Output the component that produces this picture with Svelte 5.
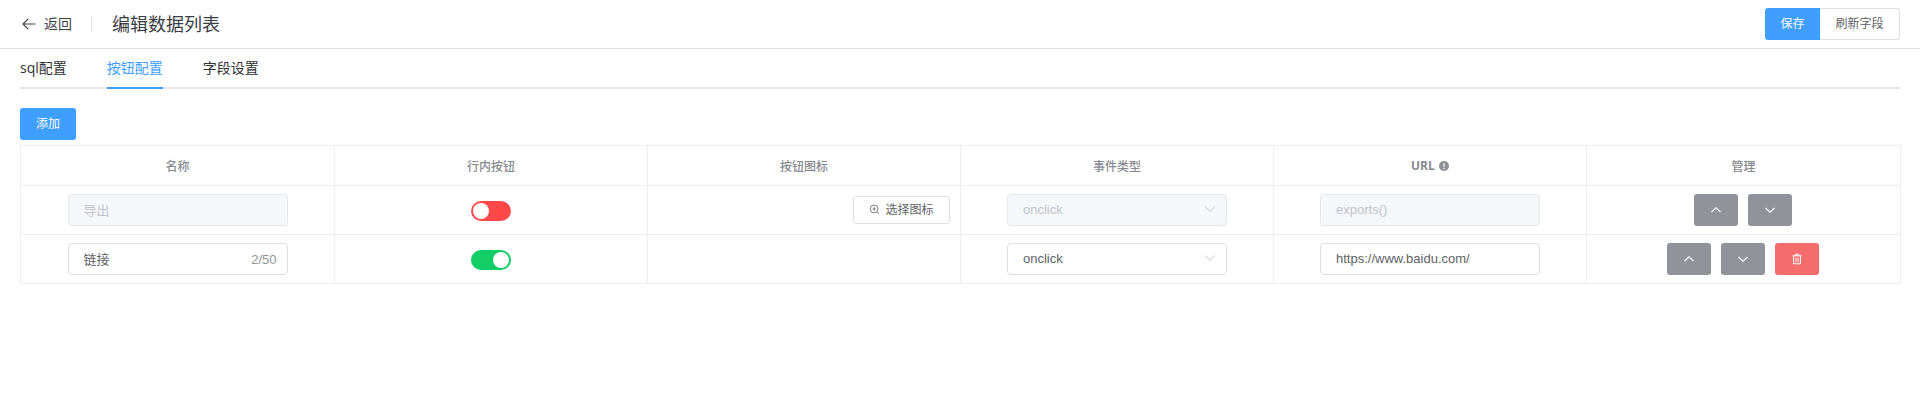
<script>
  const columns = ['名称', '行内按钮', '按钮图标', '事件类型', 'URL', '管理'];
</script>

{#snippet chevron(up)}
  <svg class="glyph" viewBox="0 0 12 12" aria-hidden="true">
    <path d={up ? 'M1.5 8 6 3.8 10.5 8' : 'M1.5 4 6 8.2 10.5 4'} fill="none" stroke="currentColor" stroke-width="1.1" />
  </svg>
{/snippet}

{#snippet opButton(up)}
  <button class="op">{@render chevron(up)}</button>
{/snippet}

{#snippet selectBox(disabled)}
  <div class="field select" class:disabled>
    <span>onclick</span>
    <svg class="arrow" viewBox="0 0 12 12" aria-hidden="true">
      <path d="M1 3.5 6 8.5 11 3.5" fill="none" stroke="currentColor" stroke-width="1" />
    </svg>
  </div>
{/snippet}

<div class="page">
  <header class="top">
    <div class="back">
      <svg class="back-icon" viewBox="0 0 14 14" aria-hidden="true">
        <path d="M13.5 7H1M6.2 1.8 1 7l5.2 5.2" fill="none" stroke="currentColor" stroke-width="1.2" />
      </svg>
      <span class="back-label">返回</span>
    </div>
    <i class="divider"></i>
    <h1>编辑数据列表</h1>
    <div class="group">
      <button class="save">保存</button>
      <button class="refresh">刷新字段</button>
    </div>
  </header>

  <nav class="tabs">
    <span class="tab">sql配置</span>
    <span class="tab active">按钮配置</span>
    <span class="tab">字段设置</span>
  </nav>

  <div class="toolbar"><button class="add">添加</button></div>

  <table>
    <colgroup>
      <col class="edge" /><col class="mid" /><col class="mid" /><col class="mid" /><col class="mid" /><col class="edge" />
    </colgroup>
    <thead>
      <tr>
        {#each columns as col}
          <th class:latin={col === 'URL'}>
            {col}
            {#if col === 'URL'}
              <svg class="info" viewBox="0 0 12 12" aria-hidden="true">
                <circle cx="6" cy="6" r="6" fill="#8c8f96" />
                <path d="M6 2.6v4.2M6 8v1.6" stroke="#fff" stroke-width="1.5" />
              </svg>
            {/if}
          </th>
        {/each}
      </tr>
    </thead>
    <tbody>
      <tr>
        <td><div class="field disabled"><span>导出</span></div></td>
        <td><span class="switch off"><b></b></span></td>
        <td class="right">
          <button class="choose">
            <svg class="zoom-icon" viewBox="0 0 12 12" aria-hidden="true">
              <circle cx="5.6" cy="5.4" r="4.3" fill="none" stroke="currentColor" stroke-width="0.9" />
              <path d="M8.8 8.6 11 10.8M5.6 3.4v3.8M3.9 5.5h3.4" fill="none" stroke="currentColor" stroke-width="0.9" />
            </svg>
            <span>选择图标</span>
          </button>
        </td>
        <td>{@render selectBox(true)}</td>
        <td><div class="field disabled"><span>exports()</span></div></td>
        <td>
          <div class="ops">
            {@render opButton(true)}
            {@render opButton(false)}
          </div>
        </td>
      </tr>
      <tr>
        <td><div class="field"><span>链接</span><em>2/50</em></div></td>
        <td><span class="switch on"><b></b></span></td>
        <td></td>
        <td>{@render selectBox(false)}</td>
        <td><div class="field"><span>https://www.baidu.com/</span></div></td>
        <td>
          <div class="ops">
            {@render opButton(true)}
            {@render opButton(false)}
            <button class="op danger">
              <svg class="glyph" viewBox="0 0 12 12" aria-hidden="true">
                <path d="M1.5 2.8h9M4.4 2.8V1.2h3.2v1.6M2.6 2.8v8h6.8v-8M5 4.6v4.6M7 4.6v4.6" fill="none" stroke="currentColor" stroke-width="1" />
              </svg>
            </button>
          </div>
        </td>
      </tr>
    </tbody>
  </table>
</div>

<style>
  :global(body) {
    margin: 0;
    background: #fff;
  }

  .page {
    font-family: "Open Sans", "Noto Sans CJK SC", sans-serif;
    font-size: 12px;
    color: #515a6e;
  }

  button {
    font-family: inherit;
    margin: 0;
    padding: 0;
    border: 0;
    background: none;
  }

  .top {
    display: flex;
    align-items: center;
    height: 48px;
    padding: 0 20px;
    border-bottom: 1px solid #dcdee2;
    color: #3a3d44;
  }

  .back {
    display: flex;
    align-items: center;
    gap: 8px;
    font-size: 14px;
    color: #3f4249;
    margin-left: 2px;
  }

  .back-label {
    padding-bottom: 2px;
  }

  .back-icon {
    width: 14px;
    height: 14px;
  }

  .divider {
    width: 1px;
    height: 16px;
    margin: 0 20px 0 19px;
    background: #e3e5e9;
  }

  h1 {
    margin: 0 0 2px;
    font-size: 18px;
    font-weight: 400;
    color: #3a3d44;
  }

  .group {
    display: flex;
    margin-left: auto;
    height: 32px;
  }

  .save {
    width: 55px;
    padding-bottom: 2px;
    background: #409eff;
    color: #fff;
    font-size: 12px;
    border-radius: 3px 0 0 3px;
  }

  .refresh {
    width: 80px;
    padding-bottom: 2px;
    box-sizing: border-box;
    border: 1px solid #dcdee2;
    border-left: 0;
    border-radius: 0 3px 3px 0;
    color: #606266;
    font-size: 12px;
  }

  .tabs {
    display: flex;
    gap: 40px;
    margin: 0 20px;
    height: 38px;
    border-bottom: 2px solid #e4e7ed;
  }

  .tab {
    height: 38px;
    line-height: 38px;
    font-size: 14px;
    color: #303133;
  }

  .active {
    color: #409eff;
    border-bottom: 2px solid #409eff;
  }

  .toolbar {
    padding: 19px 20px 5px;
    display: flex;
  }

  .add {
    width: 56px;
    height: 32px;
    padding-bottom: 2px;
    background: #409eff;
    color: #fff;
    font-size: 12px;
    border-radius: 3px;
  }

  table {
    width: 1881px;
    margin-left: 20px;
    border-collapse: separate;
    border-spacing: 0;
    border-top: 1px solid #ebeef5;
    border-left: 1px solid #ebeef5;
    table-layout: fixed;
    box-sizing: border-box;
  }

  col.edge {
    width: 314px;
  }

  col.mid {
    width: 313px;
  }

  th,
  td {
    border-right: 1px solid #ebeef5;
    border-bottom: 1px solid #ebeef5;
    padding: 8px 10px;
    box-sizing: border-box;
    text-align: center;
  }

  th {
    height: 40px;
    padding: 0 10px;
    font-size: 12px;
    font-weight: 500;
    color: #868990;
  }

  th.latin {
    font-weight: 700;
  }

  .info {
    width: 10px;
    height: 10px;
    vertical-align: -1px;
    margin-left: 1px;
  }

  .field {
    box-sizing: border-box;
    width: 220px;
    height: 32px;
    margin: 0 auto;
    padding: 0 10px 2px 15px;
    border: 1px solid #dcdfe6;
    border-radius: 4px;
    display: flex;
    align-items: center;
    justify-content: space-between;
    font-family: "Liberation Sans", "Noto Sans CJK SC", sans-serif;
    font-size: 13px;
    color: #606266;
  }

  .field em {
    font-style: normal;
    color: #909399;
    margin-top: 2px;
  }

  .field.disabled {
    background: #f5f7fa;
    border-color: #e4e7ed;
    color: #c0c4cc;
  }

  .arrow {
    width: 12px;
    height: 12px;
    color: #c0c4cc;
  }

  .switch {
    display: block;
    width: 40px;
    height: 20px;
    margin: 2px auto 0;
    border-radius: 10px;
    position: relative;
  }

  .switch b {
    position: absolute;
    top: 2px;
    width: 16px;
    height: 16px;
    border-radius: 50%;
    background: #fff;
  }

  .off {
    background: #ff4949;
  }

  .off b {
    left: 2px;
  }

  .on {
    background: #13ce66;
  }

  .on b {
    right: 2px;
  }

  .right {
    text-align: right;
  }

  .choose {
    box-sizing: border-box;
    width: 97px;
    height: 28px;
    padding-bottom: 2px;
    border: 1px solid #dcdfe6;
    border-radius: 3px;
    font-size: 12px;
    color: #606266;
    display: inline-flex;
    align-items: center;
    justify-content: center;
    gap: 5px;
    vertical-align: middle;
  }

  .zoom-icon {
    width: 11px;
    height: 11px;
  }

  .ops {
    display: flex;
    justify-content: center;
    gap: 10px;
    margin-right: 1px;
  }

  .op {
    width: 44px;
    height: 32px;
    border-radius: 3px;
    background: #909399;
    color: #fff;
    display: flex;
    align-items: center;
    justify-content: center;
  }

  .danger {
    background: #f56c6c;
  }

  .glyph {
    width: 12px;
    height: 12px;
  }
</style>
